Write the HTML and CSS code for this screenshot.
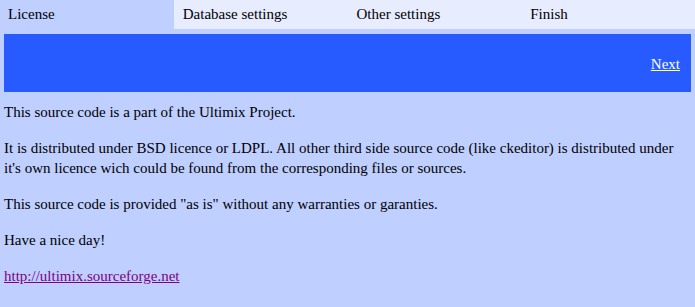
FILE: index.html
```html
<!DOCTYPE html>
<html>
<head>
<meta charset="utf-8">
<link rel="stylesheet" href="styles.css">
</head>
<body>
<div class="tabs">
  <div class="tab active">License</div>
  <div class="tab">Database settings</div>
  <div class="tab">Other settings</div>
  <div class="tab">Finish</div>
</div>
<div class="bar"><a class="next" href="#">Next</a></div>
<div class="content">
  <p>This source code is a part of the Ultimix Project.</p>
  <p>It is distributed under BSD licence or LDPL. All other third side source code (like ckeditor) is distributed under it's own licence wich could be found from the corresponding files or sources.</p>
  <p>This source code is provided "as is" without any warranties or garanties.</p>
  <p>Have a nice day!</p>
  <p><a class="site" href="#">http://ultimix.sourceforge.net</a></p>
</div>
</body>
</html>
```
FILE: styles.css
```css
html, body {
  margin: 0;
  padding: 0;
  background: #bfcfff;
  font-family: "Liberation Serif", "Times New Roman", serif;
  font-size: 15px;
  line-height: 20px;
  color: #000;
}
.tabs {
  display: grid;
  grid-template-columns: repeat(4, 1fr);
  height: 29px;
}
.tab {
  background: #e8ecff;
  padding: 4px 9px 0;
}
.tab.active {
  background: transparent;
  padding-left: 8px;
}
.bar {
  margin: 5px 4px 0;
  height: 58px;
  background: #285bff;
  display: flex;
  align-items: center;
  justify-content: flex-end;
  padding-right: 11px;
}
.next {
  color: #fff;
  padding-top: 2px;
}
.content {
  padding: 10px 4px 0;
}
.content p {
  margin: 0 0 16px;
}
.site { color: #800080; }
```
